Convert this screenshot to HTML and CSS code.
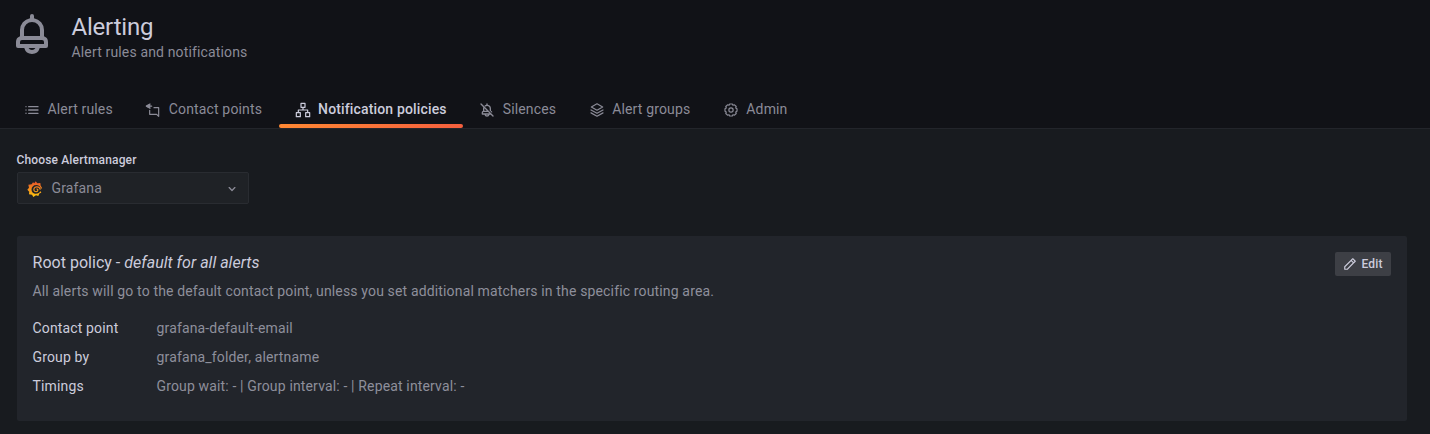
FILE: index.html
```html
<!DOCTYPE html>
<html lang="en">
<head>
<meta charset="utf-8">
<title>Alerting</title>
<link rel="stylesheet" href="styles.css">
</head>
<body>
<header class="page-header">
  <div class="title-row">
    <svg class="title-icon" viewBox="0 0 24 24"><path d="M18,13.18V10a6,6,0,0,0-5-5.91V3a1,1,0,0,0-2,0V4.09A6,6,0,0,0,6,10v3.18A3,3,0,0,0,4,16v2a1,1,0,0,0,1,1H8.14a4,4,0,0,0,7.72,0H19a1,1,0,0,0,1-1V16A3,3,0,0,0,18,13.18ZM8,10a4,4,0,0,1,8,0v3H8Zm4,10a2,2,0,0,1-1.72-1h3.44A2,2,0,0,1,12,20Zm6-3H6V16a1,1,0,0,1,1-1H17a1,1,0,0,1,1,1Z"/></svg>
    <div class="titles">
      <h1>Alerting</h1>
      <div class="subtitle">Alert rules and notifications</div>
    </div>
  </div>
  <nav class="tabs">
    <a class="tab"><svg class="icon" viewBox="0 0 24 24"><path d="M3.71,16.29a1,1,0,0,0-1.42,1.42,1,1,0,0,0,1.42-1.42ZM7,8H21a1,1,0,0,0,0-2H7A1,1,0,0,0,7,8ZM3.71,11.29a1,1,0,1,0,0,1.42A1,1,0,0,0,3.71,11.29ZM21,11H7a1,1,0,0,0,0,2H21a1,1,0,0,0,0-2ZM3.71,6.29a1,1,0,1,0,0,1.42A1,1,0,0,0,3.71,6.29ZM21,16H7a1,1,0,0,0,0,2H21a1,1,0,0,0,0-2Z"/></svg>Alert rules</a>
    <a class="tab"><svg class="icon line" viewBox="0 0 24 24"><path d="M7.500 3L2 6.200L7.500 9.400M3 6.200H10M7 12.500V18.500H17.500M20.500 21.500V8.500H13.500M17.500 18.500L20.500 21.500"/><path fill="currentColor" d="M7 3.800L3 6.200L7 8.600Z"/></svg>Contact points</a>
    <a class="tab active"><svg class="icon line" viewBox="0 0 24 24"><path d="M9 2h6v6H9zM2 16h6v6H2zM16 16h6v6h-6zM12 8v4M5 16v-4h14v4"/></svg>Notification policies</a>
    <a class="tab"><svg class="icon" viewBox="0 0 24 24"><path d="M18,13.18V10a6,6,0,0,0-5-5.91V3a1,1,0,0,0-2,0V4.09a5.9,5.9,0,0,0-2.2.83,1,1,0,0,0,1.100,1.660A3.900,3.900,0,0,1,12,6a4,4,0,0,1,4,4v2.300a1,1,0,0,0,.3.700l3,3a1,1,0,0,0,.7-.5A3,3,0,0,0,18,13.180ZM21.710,20.290l-18-18A1,1,0,0,0,2.290,3.710L6.400,7.800A6,6,0,0,0,6,10v3.180A3,3,0,0,0,4,16v2a1,1,0,0,0,1,1H8.140a4,4,0,0,0,7.720,0H17.590l2.700,2.710a1,1,0,0,0,1.420-1.420ZM8,10V9.410L11.590,13H8Zm4,10a2,2,0,0,1-1.720-1h3.440A2,2,0,0,1,12,20ZM6,17V16a1,1,0,0,1,1-1h6.590l2,2Z"/></svg>Silences</a>
    <a class="tab"><svg class="icon line" viewBox="0 0 24 24"><path d="M12 2.700L20.500 7.500L12 12.300L3.500 7.500ZM3 12L12 17L21 12M3 16.300L12 21.300L21 16.300"/></svg>Alert groups</a>
    <a class="tab"><svg class="icon line" viewBox="0 0 24 24"><circle cx="12" cy="12" r="3.200"/><path d="M10 3H14L15 4.900L17.200 4.200L19.800 6.800L19.100 9L21 10V14L19.100 15L19.800 17.200L17.200 19.800L15 19.100L14 21H10L9 19.100L6.800 19.800L4.200 17.200L4.900 15L3 14V10L4.900 9L4.200 6.800L6.800 4.200L9 4.900Z"/></svg>Admin</a>
  </nav>
</header>
<main class="content">
  <label class="field-label">Choose Alertmanager</label>
  <div class="select">
    <svg class="grafana" viewBox="0 0 24 24"><defs><linearGradient id="flame" x1="0" y1="0" x2="0" y2="24" gradientUnits="userSpaceOnUse"><stop offset="0" stop-color="#e84e2c"/><stop offset="1" stop-color="#fcc90d"/></linearGradient></defs><path fill="url(#flame)" fill-rule="evenodd" d="M13 .5L15.500 3.300L20 3L20.500 7L22.500 10L21 12.500C20.500 8 17.500 6 14 6C9.500 6 6.800 9.200 6.800 13C6.800 17 10 19.200 13 19.200C16.500 19.200 19 17.500 20 15L21.500 17.500L18.500 18.700L17 22.500L13.500 21.500L9.500 24L7.500 20.500L3 20L3.300 16L.5 13L3 10L2 5.500L7 5L9 2L11 3.200Z"/><path fill="none" stroke="url(#flame)" stroke-width="1.700" d="M20 13C19 9.500 16.500 8.500 14.200 8.800C11 9.200 9.800 11.800 10.500 14C11.500 17 16 16.800 16.300 13.800C16.300 12.500 15.300 11.800 14.200 12.200"/></svg>
    <span>Grafana</span>
    <svg class="icon chevron" viewBox="0 0 24 24"><path d="M17,9.170a1,1,0,0,0-1.410,0L12,12.710,8.460,9.170a1,1,0,0,0-1.410,0,1,1,0,0,0,0,1.420l4.240,4.240a1,1,0,0,0,1.420,0L17,10.590A1,1,0,0,0,17,9.170Z"/></svg>
  </div>
  <section class="card">
    <div class="card-head">
      <h2>Root policy - <i>default for all alerts</i></h2>
      <button class="edit"><svg class="pen" viewBox="0 0 24 24"><path d="M22,7.240a1,1,0,0,0-.29-.71L17.470,2.290A1,1,0,0,0,16.760,2a1,1,0,0,0-.71.290L13.220,5.120h0L2.290,16.050a1,1,0,0,0-.29.710V21a1,1,0,0,0,1,1H7.240A1,1,0,0,0,8,21.710L18.870,10.780h0L21.710,8a1.190,1.190,0,0,0,.22-.33,1,1,0,0,0,0-.24.700.7,0,0,0,0-.14ZM6.830,20H4V17.170l9.930-9.930,2.830,2.830ZM18.170,8.660,15.340,5.830l1.420-1.410,2.820,2.820Z"/></svg>Edit</button>
    </div>
    <p class="description">All alerts will go to the default contact point, unless you set additional matchers in the specific routing area.</p>
    <dl class="details">
      <dt>Contact point</dt><dd>grafana-default-email</dd>
      <dt>Group by</dt><dd>grafana_folder, alertname</dd>
      <dt>Timings</dt><dd>Group wait: - | Group interval: - | Repeat interval: -</dd>
    </dl>
  </section>
</main>
</body>
</html>
```
FILE: styles.css
```css
* { box-sizing: border-box; }
body {
  margin: 0;
  min-height: 434px;
  background: #181b1f;
  color: #ccccdc;
  font: 14px/22px Roboto, sans-serif;
  letter-spacing: 0.15px;
}
h1, h2, p, dl, dd { margin: 0; font-weight: 400; }
.page-header {
  height: 129px;
  background: #111217;
  border-bottom: 1px solid #23252b;
  display: flex;
  flex-direction: column;
  justify-content: space-between;
}
.title-row { display: flex; padding: 10px 8px 0; }
.title-icon { width: 48px; height: 48px; fill: #8b8b97; }
.titles { margin-left: 15.5px; padding-top: 3px; }
h1 { font-size: 24px; line-height: 28px; letter-spacing: -0.2px; }
.subtitle { color: #8b8b97; line-height: 22px; }
.tabs { display: flex; padding-left: 16px; height: 38px; }
.tab {
  position: relative;
  display: flex;
  align-items: center;
  padding: 0 16px 0 8px;
  margin-right: 8.5px;
  color: #8b8b97;
  white-space: nowrap;
}
.icon { width: 16px; height: 16px; fill: currentColor; margin: 1px 7.500px 0 0; flex: none; }
.icon.line { fill: none; stroke: currentColor; stroke-width: 1.800; stroke-linejoin: round; stroke-linecap: round; }
.active { color: #ccccdc; font-weight: 500; }
.active::after {
  content: "";
  position: absolute;
  left: -8px;
  right: -0.5px;
  bottom: 0;
  height: 4px;
  border-radius: 2px;
  background: linear-gradient(90deg, #ff8833, #f55f3e);
}
.content { padding: 23px 23px 0 17px; }
.field-label { display: block; margin-left: -0.5px; font-size: 12px; font-weight: 500; line-height: 16px; }
.select {
  display: flex;
  align-items: center;
  width: 232px;
  height: 32px;
  margin-top: 4px;
  padding: 0 8px;
  background: #1f2226;
  border: 1px solid #292c31;
  border-radius: 2px;
  color: #8b8b97;
}
.grafana { width: 16px; height: 16px; margin: 1px 9px 0 0.5px; }
.chevron { margin: 1px 0 0 auto; }
.card {
  margin-top: 32px;
  height: 185px;
  padding: 16px 16px 16px 15.5px;
  background: #22252b;
  border-radius: 2px;
}
.card-head { display: flex; justify-content: space-between; height: 24px; }
h2 { font-size: 16px; line-height: 22px; letter-spacing: 0.02px; }
.edit {
  display: flex;
  align-items: center;
  height: 24px;
  width: 56px;
  padding: 0 8px;
  border: 0;
  border-radius: 2px;
  background: #3d3f45;
  color: #ccccdc;
  font: 500 12px/22px Roboto, sans-serif;
  letter-spacing: 0.15px;
}
.pen { width: 14px; height: 14px; margin-right: 4.5px; fill: currentColor; flex: none; }
.description { margin-top: 4px; color: #8e8f9b; }
.details {
  display: grid;
  grid-template-columns: 124px 1fr;
  row-gap: 7px;
  margin-top: 15px;
}
.details dd { color: #8e8f9b; }
```
